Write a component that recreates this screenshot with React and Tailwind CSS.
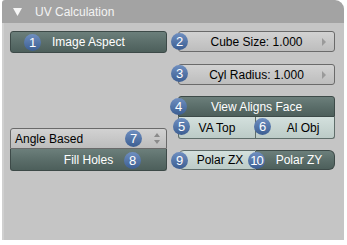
import React from "react";

const font = { fontFamily: '"Liberation Sans", "DejaVu Sans", sans-serif' };

function Badge({ n, className = "" }) {
  return (
    <span
      className={
        "absolute flex h-[17px] w-[17px] items-center justify-center rounded-full bg-gradient-to-b from-[#6f8fc0] to-[#3c5e92] text-[13px] leading-none text-white " +
        className
      }
    >
      {n}
    </span>
  );
}

const dark =
  "bg-gradient-to-b from-[#6c7f7b] via-[#5b6e6a] to-[#4d5f5b] border border-[#3d4a48] text-white";
const light =
  "bg-gradient-to-b from-[#d2d2d2] to-[#bdbdbd] border border-[#6a6a6a] text-black";
const teal =
  "bg-gradient-to-b from-[#d3e0dd] to-[#bccbc7] border border-[#5f6d6a] text-black";

function Arrow() {
  return (
    <svg width="6" height="8" viewBox="0 0 6 8" className="absolute right-[7px] top-[6px]">
      <path d="M1 0 L5 4 L1 8 Z" fill="#9a9a9a" />
    </svg>
  );
}

export default function App() {
  return (
    <div className="h-[245px] w-[347px] bg-white" style={font}>
      <div className="ml-[2px] w-[342px]">
        <div className="flex h-[23px] items-center rounded-tl-[3px] rounded-tr-[9px] bg-[#a3a3a3]">
          <svg width="9" height="8" viewBox="0 0 9 8" className="ml-[11px]">
            <path d="M0 0 L9 0 L4.5 8 Z" fill="#f6f6f6" />
          </svg>
          <span className="ml-[13px] text-[12px] text-[#f3f3f3]">UV Calculation</span>
        </div>
        <div className="flex h-[217px] gap-[11px] border-l-2 border-[#d0d0d0] bg-[#c5c5c5] pl-[6px] pt-[8px] text-[12px]">
          <div className="flex w-[157px] flex-col">
            <div className={"relative flex h-[22px] items-center rounded-[3px] pl-[41px] " + dark}>
              <Badge n="1" className="left-[13px] top-[2px]" />
              Image Aspect
            </div>
            <div className={"relative mt-[75px] flex h-[21px] items-center rounded-t-[3px] pl-[4px] " + light}>
              Angle Based
              <Badge n="7" className="left-[114px] top-[1px]" />
              <svg width="8" height="11" viewBox="0 0 8 11" className="absolute right-[5px] top-[4px]">
                <path d="M4 0 L7 4 L1 4 Z M4 11 L7 7 L1 7 Z" fill="#8a8a8a" />
              </svg>
            </div>
            <div className={"relative flex h-[22px] items-center justify-center rounded-b-[3px] border-t-0 " + dark}>
              Fill Holes
              <Badge n="8" className="left-[113px] top-[3px]" />
            </div>
          </div>
          <div className="flex w-[157px] flex-col">
            <div className={"relative flex h-[21px] items-center justify-center rounded-[3px] " + light}>
              <Badge n="2" className="left-[-8px] top-[1px]" />
              Cube Size: 1.000
              <Arrow />
            </div>
            <div className={"relative mt-[12px] flex h-[21px] items-center justify-center rounded-[3px] " + light}>
              <Badge n="3" className="left-[-8px] top-[0px]" />
              Cyl Radius: 1.000
              <Arrow />
            </div>
            <div className={"relative mt-[11px] flex h-[21px] items-center justify-center rounded-t-[3px] " + dark}>
              <Badge n="4" className="left-[-9px] top-[1px]" />
              View Aligns Face
            </div>
            <div className="flex h-[22px]">
              <div className={"relative flex w-[78px] items-center justify-center rounded-bl-[3px] border-t-0 " + teal}>
                <Badge n="5" className="left-[-6px] top-[1px]" />
                VA Top
              </div>
              <div className={"relative flex flex-1 items-center justify-center rounded-br-[3px] border-l-0 border-t-0 " + teal}>
                <Badge n="6" className="left-[-2px] top-[1px]" />
                <span className="ml-[16px]">Al Obj</span>
              </div>
            </div>
            <div className="mt-[11px] flex h-[20px]">
              <div className={"relative flex w-[78px] items-center justify-center rounded-l-[6px] pl-[6px] " + teal}>
                <Badge n="9" className="left-[-8px] top-[1px]" />
                Polar ZX
              </div>
              <div className={"relative flex flex-1 items-center justify-center rounded-r-[6px] border-l-0 pl-[8px] " + dark}>
                <Badge n="10" className="left-[-8px] top-[1px] text-[12px] tracking-[-1px]" />
                Polar ZY
              </div>
            </div>
          </div>
        </div>
      </div>
    </div>
  );
}
